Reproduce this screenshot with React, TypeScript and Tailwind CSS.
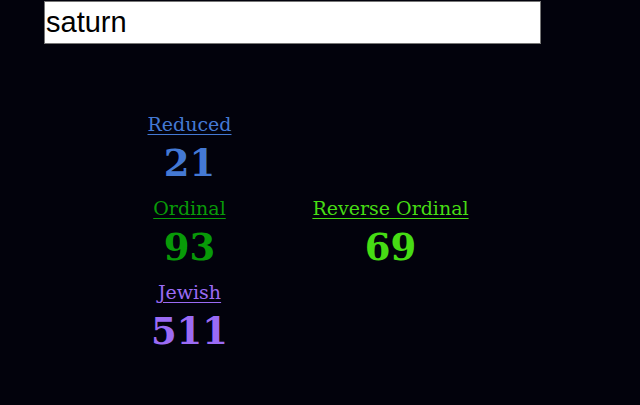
import React, { useState } from "react";

type Cipher = {
    name: string;
    value: number;
    color: string;
};

const rows: (Cipher | null)[][] = [
    [{ name: "Reduced", value: 21, color: "text-[#4479d4]" }, null],
    [
        { name: "Ordinal", value: 93, color: "text-[#089a08]" },
        { name: "Reverse Ordinal", value: 69, color: "text-[#46dc14]" },
    ],
    [{ name: "Jewish", value: 511, color: "text-[#9b6bf5]" }, null],
];

const CipherCell = ({ cipher }: { cipher: Cipher | null }) => {
    if (!cipher) return <div className="w-[201px]" />;
    return (
        <div className={`w-[201px] flex flex-col items-center ${cipher.color}`}>
            <span className="underline underline-offset-[3px] text-[19px] leading-[24px] [font-family:'DejaVu_Serif',serif]">
                {cipher.name}
            </span>
            <span className="mt-[3px] font-bold text-[37px] leading-[48px] [font-family:'DejaVu_Serif',serif]">
                {cipher.value}
            </span>
        </div>
    );
};

export default function App() {
    const [text, setText] = useState("saturn");

    return (
        <div className="w-[640px] h-[405px] bg-[#02020c] overflow-hidden">
            <div className="pl-[44px] pt-[1px]">
                <input
                    value={text}
                    onChange={(e) => setText(e.target.value)}
                    className="w-[497px] h-[43px] bg-white border border-[#767676] px-[1px] text-[29px] text-black outline-none [font-family:'Liberation_Sans',Arial,sans-serif]"
                />
            </div>
            <div className="flex flex-col pl-[89px] pt-[68px] gap-[9px]">
                {rows.map((row, i) => (
                    <div key={i} className="flex flex-row">
                        {row.map((c, j) => (
                            <CipherCell key={j} cipher={c} />
                        ))}
                    </div>
                ))}
            </div>
        </div>
    );
}
